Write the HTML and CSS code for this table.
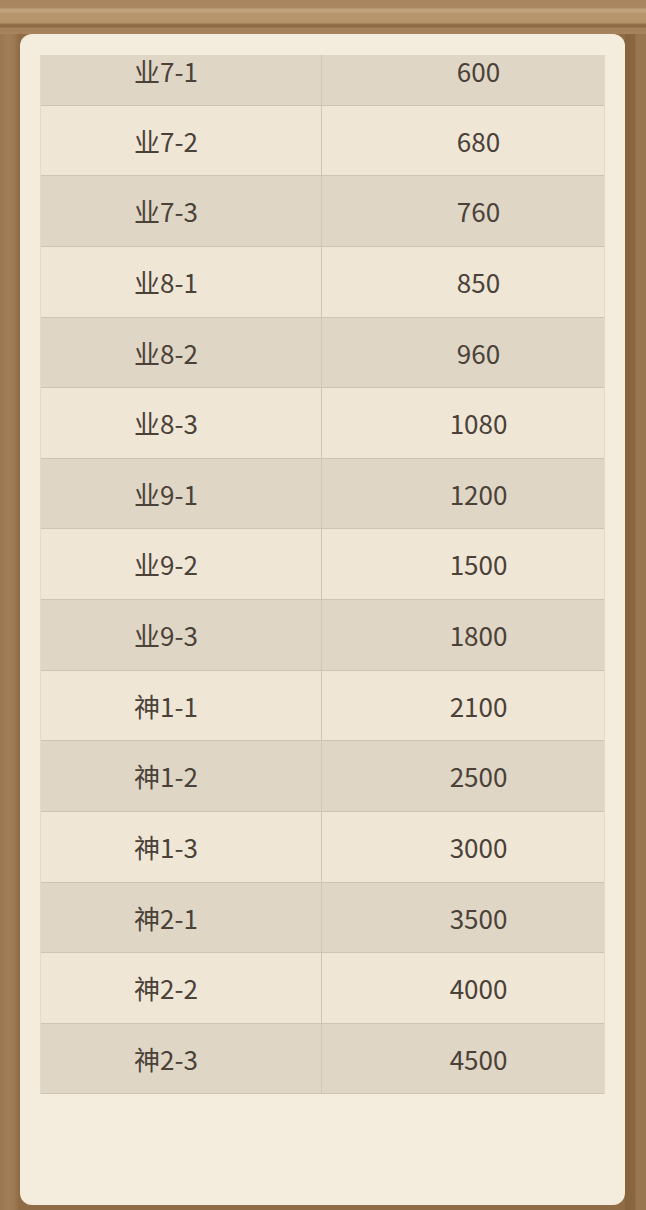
FILE: index.html
```html
<!DOCTYPE html>
<html lang="zh">
<head>
<meta charset="utf-8">
<link rel="stylesheet" href="styles.css">
</head>
<body>
<div class="frame">
  <div class="panel">
    <div class="viewport">
      <div class="table">
        <div class="row dark first"><div class="c1">业7-1</div><div class="c2">600</div></div>
        <div class="row light"><div class="c1">业7-2</div><div class="c2">680</div></div>
        <div class="row dark"><div class="c1">业7-3</div><div class="c2">760</div></div>
        <div class="row light"><div class="c1">业8-1</div><div class="c2">850</div></div>
        <div class="row dark"><div class="c1">业8-2</div><div class="c2">960</div></div>
        <div class="row light"><div class="c1">业8-3</div><div class="c2">1080</div></div>
        <div class="row dark"><div class="c1">业9-1</div><div class="c2">1200</div></div>
        <div class="row light"><div class="c1">业9-2</div><div class="c2">1500</div></div>
        <div class="row dark"><div class="c1">业9-3</div><div class="c2">1800</div></div>
        <div class="row light"><div class="c1">神1-1</div><div class="c2">2100</div></div>
        <div class="row dark"><div class="c1">神1-2</div><div class="c2">2500</div></div>
        <div class="row light"><div class="c1">神1-3</div><div class="c2">3000</div></div>
        <div class="row dark"><div class="c1">神2-1</div><div class="c2">3500</div></div>
        <div class="row light"><div class="c1">神2-2</div><div class="c2">4000</div></div>
        <div class="row dark"><div class="c1">神2-3</div><div class="c2">4500</div></div>
      </div>
    </div>
  </div>
</div>
</body>
</html>
```
FILE: styles.css
```css
html, body {
  margin: 0;
  padding: 0;
}
body {
  width: 646px;
  height: 1210px;
  overflow: hidden;
  background: #8f6b46;
}
.frame {
  width: 646px;
  height: 1210px;
  box-sizing: border-box;
  padding: 34px 21px 5px 20px;
  background:
    linear-gradient(to bottom,
      #a8845e 0px, #aa8762 8px,
      #c2a580 9px, #c0a27d 12px,
      #b7966e 13px, #b49269 23px,
      #93704a 24px, #8c6943 27px,
      #a4815b 28px, #a6835d 34px,
      transparent 34px),
    linear-gradient(to right,
      #9a7651 0px, #a07c57 8px,
      #9e7a54 14px, #8e6a44 20px,
      transparent 20px, transparent 625px,
      #86623d 625px, #8a6641 635px,
      #9a7650 636px, #997550 646px);
  background-color: #8f6b46;
}
.panel {
  height: 1171px;
  box-sizing: border-box;
  background: #f4ecdc;
  border-radius: 12px;
  padding: 16px 20px 0 20px;
  font-family: "Noto Sans CJK SC", "Noto Sans", sans-serif;
  color: #4a4139;
}
.viewport {
  height: 1155px;
  box-sizing: border-box;
  padding-top: 5px;
  overflow: hidden;
}
.table {
  border-left: 1px solid #e2d9c9;
  border-right: 1px solid #e2d9c9;
}
.row {
  display: grid;
  grid-template-columns: 281px 1fr;
  height: 70.64px;
  box-sizing: border-box;
  border-bottom: 1px solid #cec4b3;
  font-size: 26px;
  line-height: 69px;
}
.row.first {
  height: 50.64px;
  line-height: 32px;
}
.row.dark {
  background: #dfd6c5;
}
.row.light {
  background: #efe6d6;
}
.c1 {
  text-align: center;
  padding-right: 30px;
  border-right: 1px solid #d0c6b5;
}
.c2 {
  text-align: center;
  padding-left: 31px;
}
```
